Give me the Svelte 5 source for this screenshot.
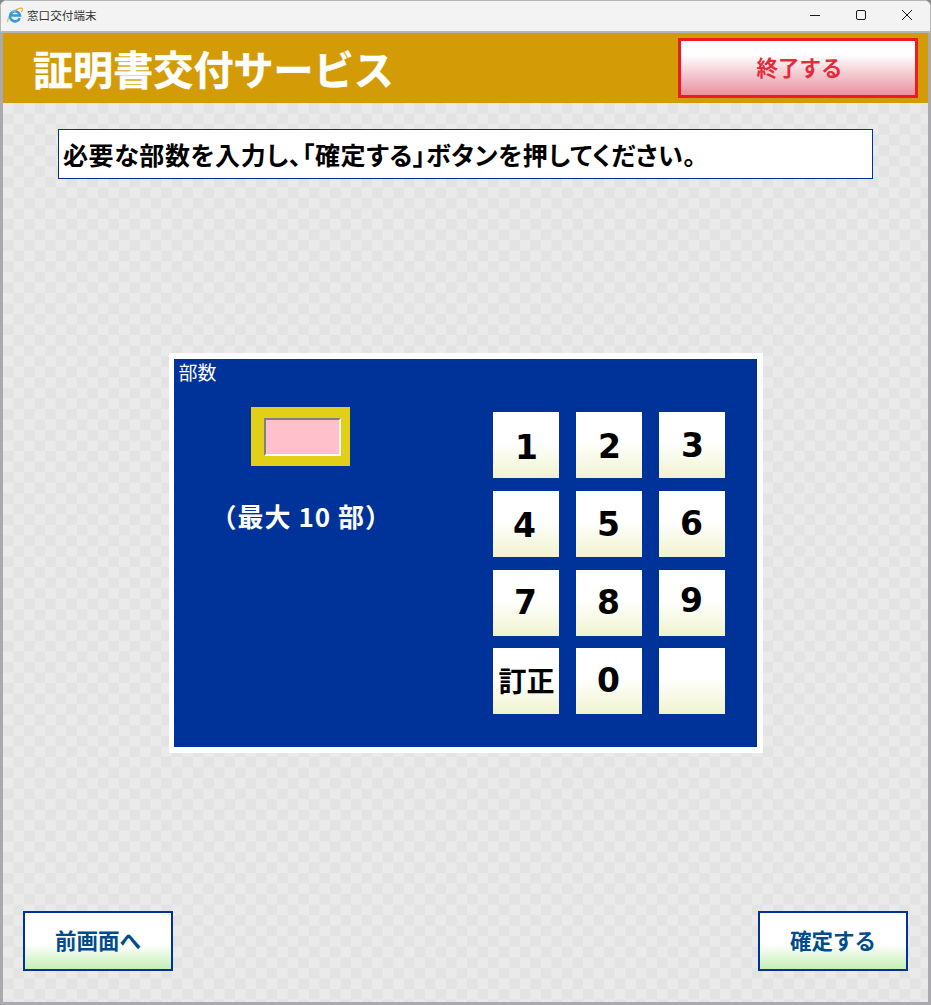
<script>
  const keys = [
    { t: '1', dx: 1, dy: 2 }, { t: '2', dx: 1, dy: 1 }, { t: '3', dx: 1, dy: 0 },
    { t: '4', dx: -1, dy: 1 }, { t: '5', dx: 0, dy: 0 }, { t: '6', dx: 0, dy: -1 },
    { t: '7', dx: 0, dy: -1 }, { t: '8', dx: 0, dy: -1 }, { t: '9', dx: 0, dy: -3 },
    { t: '訂正', dx: 1, dy: -1, small: true }, { t: '0', dx: 0, dy: -1 }, { t: '', dx: 0, dy: 0 }
  ];
</script>

<div class="window">
  <header class="titlebar">
    <div class="title">
      <svg class="ie" width="16" height="16" viewBox="0 0 16 16" aria-hidden="true">
        <path d="M1 15C-.2 12.500 3.500 6 8 3.300 11 1.500 14.600.4 15.300 1.700c.5.9-.3 2.400-1.200 3.400" fill="none" stroke="#f0b429" stroke-width="1.200"/>
        <path d="M12.700 11.200A5 5 0 1 1 13 8.500H4.500" fill="none" stroke="#2f9be0" stroke-width="2.600"/>
        <path d="M5 5.400A4 4 0 0 1 9 4" fill="none" stroke="#9ed6f7" stroke-width="1"/>
      </svg>
      <span>窓口交付端末</span>
    </div>
    <div class="controls">
      <svg width="12" height="12" viewBox="0 0 12 12"><path d="M1 6.500h10" stroke="#1a1a1a" fill="none"/></svg>
      <svg width="12" height="12" viewBox="0 0 12 12"><rect x="1.500" y="1.500" width="9" height="9" rx="1.500" stroke="#1a1a1a" fill="none"/></svg>
      <svg width="12" height="12" viewBox="0 0 12 12"><path d="M1 1l10 10M11 1L1 11" stroke="#1a1a1a" fill="none"/></svg>
    </div>
  </header>

  <main class="content">
    <section class="banner">
      <h1>証明書交付サービス</h1>
      <button class="exit">終了する</button>
    </section>

    <div class="body">
      <p class="message">必要な部数を入力し、「確定する」ボタンを押してください。</p>

      <section class="panel">
        <div class="label">部数</div>
        <div class="panel-grid">
          <div class="left">
            <div class="field-wrap"><div class="field"></div></div>
            <div class="hint">（最大 10 部）</div>
          </div>
          <div class="keypad">
            {#each keys as k}
              <button class="key" class:small={k.small}>
                <span style="transform: translate({k.dx}px, {k.dy}px)">{k.t}</span>
              </button>
            {/each}
          </div>
        </div>
      </section>

      <footer class="footer">
        <button class="nav">前画面へ</button>
        <button class="nav">確定する</button>
      </footer>
    </div>
  </main>
</div>

<style>
  :global(body) {
    margin: 0;
    background: #8a8a8a;
  }
  * { box-sizing: border-box; }
  .window {
    width: 931px;
    height: 1005px;
    display: flex;
    flex-direction: column;
    background: #a9a9ae;
    border-radius: 8px 8px 0 0;
    overflow: hidden;
    font-family: "Noto Sans CJK JP", "Noto Sans", sans-serif;
  }
  .titlebar {
    height: 33px;
    flex: none;
    display: flex;
    justify-content: space-between;
    align-items: center;
    padding: 0 17px 2px 6px;
    border-top: 1px solid #b4b4b4;
    border-left: 1px solid #b4b4b4;
    border-right: 1px solid #b4b4b4;
    border-bottom: 2px solid #b5b5b5;
    background: #f3f3f3;
  }
  .title {
    display: flex;
    align-items: center;
    gap: 4px;
    font-size: 11.5px;
    letter-spacing: 0.1px;
    color: #333;
  }
  .controls {
    display: flex;
    gap: 34px;
  }
  .controls svg { display: block; }
  .content {
    flex: 1;
    display: flex;
    flex-direction: column;
    margin: 0 3px 3px;
    background: #e6e6e6;
  }
  .banner {
    height: 70px;
    flex: none;
    display: flex;
    justify-content: space-between;
    align-items: center;
    background: #d39b05;
    padding: 5px 10px 5px 30px;
  }
  h1 {
    margin: 0;
    font-size: 40px;
    font-weight: 700;
    line-height: 60px;
    color: #fff;
    letter-spacing: 0.1px;
    -webkit-text-stroke: 0.5px #fff;
  }
  .exit {
    width: 240px;
    height: 60px;
    border: 3px solid #ed1c24;
    background: linear-gradient(#fff 0%, #fff 25%, #e8919f 100%);
    color: #e52c3a;
    font: 700 21.5px "Noto Sans CJK JP", sans-serif;
    padding: 0 0 3px 3px;
  }
  .body {
    flex: 1;
    display: flex;
    flex-direction: column;
    align-items: center;
    padding-top: 26px;
    background-color: #e6e6e6;
    background-image: conic-gradient(#eaeaea 25%, #e3e3e3 0 50%, #eaeaea 0 75%, #e3e3e3 0);
    background-size: 21.1px 21.1px;
    background-position: 10.55px 0;
  }
  .message {
    margin: 0;
    width: 815px;
    height: 50px;
    border: 1px solid #003399;
    background: #fff;
    padding: 0 0 2px 4px;
    font-size: 25px;
    font-weight: 700;
    font-feature-settings: "palt";
    letter-spacing: 0.6px;
    line-height: 48px;
    color: #000;
    white-space: nowrap;
  }
  .panel {
    width: 594px;
    height: 400px;
    margin-top: 174px;
    border-style: solid;
    border-color: #fff;
    border-width: 6px 6px 6px 5px;
    background: #003399;
    display: flex;
    flex-direction: column;
  }
  .label {
    height: 53px;
    padding: 0 0 0 5px;
    font-size: 19px;
    line-height: 26px;
    color: #fff;
  }
  .panel-grid {
    display: flex;
    justify-content: space-between;
  }
  .left {
    width: 254px;
    display: flex;
    flex-direction: column;
    margin-top: -5px;
  }
  .field-wrap {
    width: 99px;
    height: 59px;
    margin-left: 77px;
    background: #e2cf17;
    padding: 11px 9px 10px 13px;
  }
  .field {
    width: 77px;
    height: 38px;
    background: #ffc0cb;
    border: 2px solid;
    border-color: #808080 #fff #fff #808080;
  }
  .hint {
    margin-top: 32px;
    margin-left: 37px;
    font-size: 26px;
    font-weight: 700;
    letter-spacing: 1px;
    line-height: 36px;
    color: #fff;
    white-space: nowrap;
  }
  .keypad {
    display: grid;
    grid-template-columns: repeat(3, 66px);
    grid-auto-rows: 66px;
    column-gap: 17px;
    row-gap: 13px;
    margin-right: 32px;
  }
  .key {
    height: 66px;
    border: 0;
    padding: 0;
    display: flex;
    align-items: center;
    justify-content: center;
    background: linear-gradient(#fff 0%, #fff 45%, #f0f3cf 100%);
    color: #000;
    font: 700 33px "DejaVu Sans", sans-serif;
    line-height: 1;
  }
  .key:nth-child(n + 10) { margin-top: -1px; }
  .key.small {
    font: 700 28px "Noto Sans CJK JP", sans-serif;
    white-space: nowrap;
  }
  .key span { display: block; }
  .footer {
    width: 100%;
    margin-top: auto;
    display: flex;
    justify-content: space-between;
    padding: 0 20px 31px;
  }
  .nav {
    width: 150px;
    height: 60px;
    border: 2px solid #003399;
    background: linear-gradient(#fff 0%, #fff 55%, #c5efb5 100%);
    color: #004b8c;
    font: 700 21.5px "Noto Sans CJK JP", sans-serif;
    padding: 0 0 4px;
  }
</style>
